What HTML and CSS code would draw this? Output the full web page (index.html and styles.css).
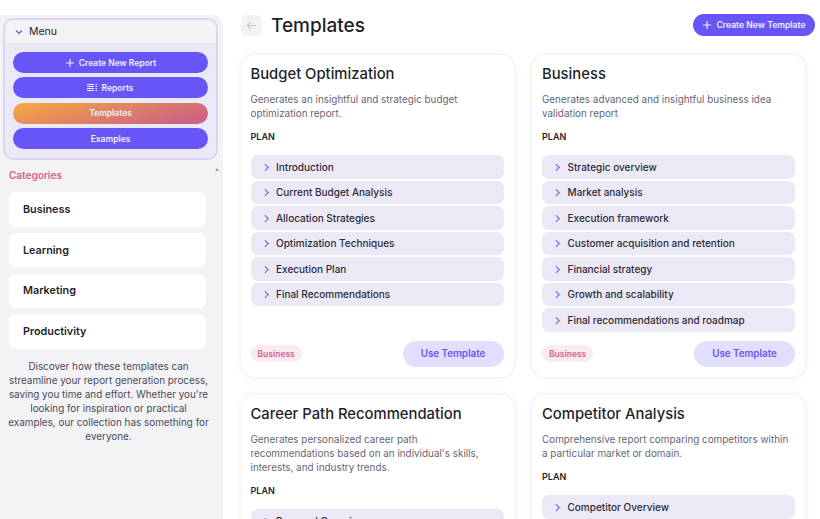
FILE: index.html
```html
<!DOCTYPE html>
<html lang="en">

<head>
    <meta charset="UTF-8">
    <meta name="viewport" content="width=device-width, initial-scale=1.0">
    <title>Templates</title>
    <link rel="stylesheet" href="styles.css">
</head>

<body>
    <div class="app">

        <!-- Sidebar -->
        <aside class="sidebar">
            <div class="menu">
                <div class="menu-head">
                    <svg class="menu-chevron" width="10" height="10" viewBox="0 0 10 10"><path d="M2 3.5 5 6.5 8 3.5" /></svg>
                    <span>Menu</span>
                </div>
                <div class="menu-body">
                    <a class="menu-btn">
                        <svg width="10" height="10" viewBox="0 0 10 10"><path d="M5 1V9M1 5H9" /></svg>
                        Create New Report
                    </a>
                    <a class="menu-btn">
                        <svg width="10" height="7" viewBox="0 0 10 7"><path d="M0 .5H7M0 2.5H7M0 4.5H7M0 6.5H7M8.5 .5H10M8.5 2.5H10M8.5 4.5H10M8.5 6.5H10" /></svg>
                        Reports
                    </a>
                    <a class="menu-btn menu-btn-active">Templates</a>
                    <a class="menu-btn">Examples</a>
                </div>
            </div>

            <div class="categories-head">
                <h4>Categories</h4>
                <span class="scroll-up"></span>
            </div>
            <a class="category">Business</a>
            <a class="category">Learning</a>
            <a class="category">Marketing</a>
            <a class="category">Productivity</a>
            <p class="side-note">Discover how these templates can streamline your report generation process, saving you time and effort. Whether you're looking for inspiration or practical examples, our collection has something for everyone.</p>
        </aside>

        <!-- Main content -->
        <main class="main">
            <div class="topbar">
                <button class="back" type="button">
                    <svg width="11" height="11" viewBox="0 0 11 11"><path d="M10 5.5H1.5M5 2 1.5 5.5 5 9" /></svg>
                </button>
                <h1>Templates</h1>
                <button class="create" type="button">
                    <svg width="10" height="10" viewBox="0 0 10 10"><path d="M5 1V9M1 5H9" /></svg>
                    Create New Template
                </button>
            </div>

            <div class="grid">
                <section class="card">
                    <h2>Budget Optimization</h2>
                    <p class="desc">Generates an insightful and strategic budget optimization report.</p>
                    <h3>PLAN</h3>
                    <ul class="plan">
                        <li>Introduction</li>
                        <li>Current Budget Analysis</li>
                        <li>Allocation Strategies</li>
                        <li>Optimization Techniques</li>
                        <li>Execution Plan</li>
                        <li>Final Recommendations</li>
                    </ul>
                    <div class="card-foot">
                        <span class="tag">Business</span>
                        <button class="use" type="button">Use Template</button>
                    </div>
                </section>

                <section class="card">
                    <h2>Business</h2>
                    <p class="desc">Generates advanced and insightful business idea validation report</p>
                    <h3>PLAN</h3>
                    <ul class="plan">
                        <li>Strategic overview</li>
                        <li>Market analysis</li>
                        <li>Execution framework</li>
                        <li>Customer acquisition and retention</li>
                        <li>Financial strategy</li>
                        <li>Growth and scalability</li>
                        <li>Final recommendations and roadmap</li>
                    </ul>
                    <div class="card-foot">
                        <span class="tag">Business</span>
                        <button class="use" type="button">Use Template</button>
                    </div>
                </section>

                <section class="card">
                    <h2>Career Path Recommendation</h2>
                    <p class="desc">Generates personalized career path recommendations based on an individual's skills, interests, and industry trends.</p>
                    <h3>PLAN</h3>
                    <ul class="plan">
                        <li>Personal Overview</li>
                    </ul>
                </section>

                <section class="card">
                    <h2>Competitor Analysis</h2>
                    <p class="desc">Comprehensive report comparing competitors within a particular market or domain.</p>
                    <h3>PLAN</h3>
                    <ul class="plan">
                        <li>Competitor Overview</li>
                    </ul>
                </section>
            </div>
        </main>

    </div>
</body>

</html>
```

FILE: styles.css
```css
/* Basic Reset */
body,
h1,
h2,
h3,
h4,
p,
ul {
    margin: 0;
    padding: 0;
}

html,
body {
    height: 519px;
    overflow: hidden;
}

body {
    background: #fff;
    color: #1f1f2b;
    font-family: 'Inter', 'Open Sans', sans-serif;
}

svg {
    fill: none;
    stroke: currentColor;
    stroke-width: 1.2;
}

.app {
    display: flex;
    height: 519px;
}

/* Sidebar */
.sidebar {
    flex: 0 0 223px;
    margin-top: 15px;
    padding: 3px 5px 0 3px;
    box-sizing: border-box;
    background: #f3f3f5;
    border-top-right-radius: 10px;
}

.menu {
    border: 2px solid #d9d6f6;
    border-radius: 10px;
    overflow: hidden;
    background: #ebe9f6;
}

.menu-head {
    display: flex;
    align-items: center;
    gap: 5px;
    height: 23px;
    padding-left: 9px;
    background: #f3f3f5;
    font-size: 10.5px;
}

.menu-chevron {
    color: #6a57f6;
}

.menu-body {
    display: flex;
    flex-direction: column;
    gap: 4.4px;
    padding: 9px 8px 9px 8px;
}

.menu-btn {
    display: flex;
    align-items: center;
    justify-content: center;
    gap: 4px;
    height: 21px;
    border-radius: 11px;
    background: #6855f7;
    color: #f1effe;
    font-size: 8.5px;
    font-weight: 600;
}

.menu-btn-active {
    background: linear-gradient(165deg, #f0a347 10%, #cf6481 85%);
}

.categories-head {
    display: flex;
    justify-content: space-between;
    height: 32px;
    padding: 8px 0 0 6px;
    box-sizing: border-box;
}

.categories-head h4 {
    margin-top: 1px;
    color: #d0648a;
    font-size: 10px;
    font-weight: 600;
}

.scroll-up {
    width: 0;
    height: 0;
    margin-right: -1px;
    border-left: 2.5px solid transparent;
    border-right: 2.5px solid transparent;
    border-bottom: 3px solid #9a9aa0;
}

.category {
    display: flex;
    align-items: center;
    width: 197px;
    height: 34.5px;
    margin: 0 0 6.2px 6px;
    padding-left: 14px;
    box-sizing: border-box;
    border-radius: 7px;
    background: #fff;
    font-size: 10.8px;
    font-weight: 600;
}

.side-note {
    margin-top: 10px;
    margin-left: 3px;
    width: 205px;
    color: #4a4a58;
    font-size: 9.9px;
    line-height: 14px;
    text-align: center;
}

/* Main content */
.main {
    flex: 1;
    min-width: 0;
    padding: 14px 5px 0 17.5px;
}

.topbar {
    display: flex;
    align-items: center;
    height: 22px;
    margin-bottom: 19px;
}

.back {
    display: flex;
    align-items: center;
    justify-content: center;
    width: 21px;
    height: 21px;
    padding: 0;
    margin-left: 0.5px;
    border: 0;
    border-radius: 6px;
    background: #f3f3f5;
    color: #c8c8ce;
}

.topbar h1 {
    margin-left: 9px;
    font-size: 19px;
    font-weight: 500;
}

.create {
    display: flex;
    align-items: center;
    justify-content: center;
    gap: 4px;
    width: 122px;
    height: 22px;
    margin-left: auto;
    padding: 0;
    border: 0;
    border-radius: 11px;
    background: #6855f7;
    color: #f1effe;
    font-family: inherit;
    font-size: 8.6px;
    font-weight: 600;
}

.grid {
    display: grid;
    grid-template-columns: 273px 273px;
    column-gap: 18.5px;
    row-gap: 18.6px;
}

.card {
    display: flex;
    flex-direction: column;
    box-sizing: border-box;
    padding: 11px 10px 10px 10px;
    border-radius: 14px;
    background: #fff;
    box-shadow: 0 0 6px rgba(30, 30, 60, 0.1);
}

.card h2 {
    font-size: 14.8px;
    font-weight: 500;
    line-height: 17px;
}

.desc {
    margin-top: 9px;
    color: #666672;
    font-size: 9.9px;
    line-height: 14px;
}

.card h3 {
    margin-top: 10px;
    font-size: 9px;
    font-weight: 600;
    line-height: 13px;
}

.plan {
    display: flex;
    flex-direction: column;
    gap: 2px;
    margin-top: 12px;
    list-style: none;
}

.plan li {
    display: flex;
    align-items: center;
    height: 23.5px;
    padding-left: 25.5px;
    position: relative;
    border-radius: 7px;
    background: #ebe9f6;
    color: #2b2b38;
    font-size: 10px;
    font-weight: 500;
}

.plan li::before {
    content: "";
    position: absolute;
    left: 12px;
    top: 9.5px;
    width: 3.5px;
    height: 3.5px;
    border-top: 1.3px solid #6855f7;
    border-right: 1.3px solid #6855f7;
    transform: rotate(45deg);
}

.card-foot {
    display: flex;
    align-items: center;
    justify-content: space-between;
    margin-top: auto;
    padding-top: 9px;
}

.tag {
    display: flex;
    align-items: center;
    height: 17px;
    padding: 0 7px;
    border-radius: 9px;
    background: #fbebf0;
    color: #d0648a;
    font-size: 8.5px;
    font-weight: 600;
}

.use {
    width: 101px;
    height: 26px;
    padding: 0;
    border: 0;
    border-radius: 13px;
    background: #e2defd;
    color: #6855f7;
    font-family: inherit;
    font-size: 9.8px;
    font-weight: 600;
}
```
